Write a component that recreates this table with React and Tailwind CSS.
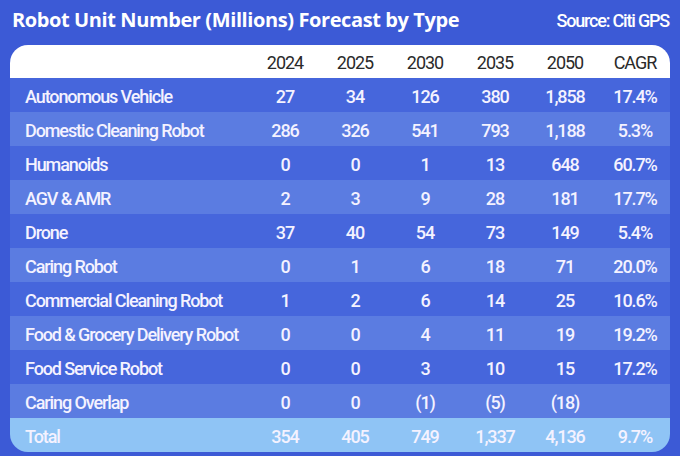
const rows = [
  ["Autonomous Vehicle", "27", "34", "126", "380", "1,858", "17.4%"],
  ["Domestic Cleaning Robot", "286", "326", "541", "793", "1,188", "5.3%"],
  ["Humanoids", "0", "0", "1", "13", "648", "60.7%"],
  ["AGV & AMR", "2", "3", "9", "28", "181", "17.7%"],
  ["Drone", "37", "40", "54", "73", "149", "5.4%"],
  ["Caring Robot", "0", "1", "6", "18", "71", "20.0%"],
  ["Commercial Cleaning Robot", "1", "2", "6", "14", "25", "10.6%"],
  ["Food & Grocery Delivery Robot", "0", "0", "4", "11", "19", "19.2%"],
  ["Food Service Robot", "0", "0", "3", "10", "15", "17.2%"],
  ["Caring Overlap", "0", "0", "(1)", "(5)", "(18)", ""],
];

const years = ["2024", "2025", "2030", "2035", "2050", "CAGR"];

function Row({ cells, className }) {
  return (
    <div className={`grid grid-cols-[240px_repeat(6,70px)] h-[34px] items-center pt-[2px] ${className}`}>
      <span className="pl-[15px]">{cells[0]}</span>
      {cells.slice(1).map((c, i) => (
        <span key={i} className="text-center">{c}</span>
      ))}
    </div>
  );
}

export default function App() {
  return (
    <div className="w-[680px] h-[456px] bg-[#3c5ad6] px-[10px] pt-[5px] font-['Roboto',sans-serif]">
      <div className="flex items-center justify-between h-[30px] pl-[2px]">
        <h1 className="text-white font-bold text-[20px] tracking-[-0.4px] font-['Open_Sans',sans-serif]">
          Robot Unit Number (Millions) Forecast by Type
        </h1>
        <span className="text-white font-medium text-[18px] tracking-[-1.2px] pr-[1px]">Source: Citi GPS</span>
      </div>
      <div className="mt-[10px] rounded-[18px] overflow-hidden text-[18px] font-medium tracking-[-1.1px] text-[#f4f2ff]">
        <div className="grid grid-cols-[240px_repeat(6,70px)] h-[33px] items-center pt-[2px] bg-white text-[#2a2a2a] font-normal tracking-[-1px]">
          <span />
          {years.map((y) => (
            <span key={y} className="text-center">{y}</span>
          ))}
        </div>
        {rows.map((r, i) => (
          <Row key={r[0]} cells={r} className={i % 2 === 0 ? "bg-[#4666dc]" : "bg-[#5b7ce1]"} />
        ))}
        <Row cells={["Total", "354", "405", "749", "1,337", "4,136", "9.7%"]} className="bg-[#8fc4f5]" />
      </div>
    </div>
  );
}
